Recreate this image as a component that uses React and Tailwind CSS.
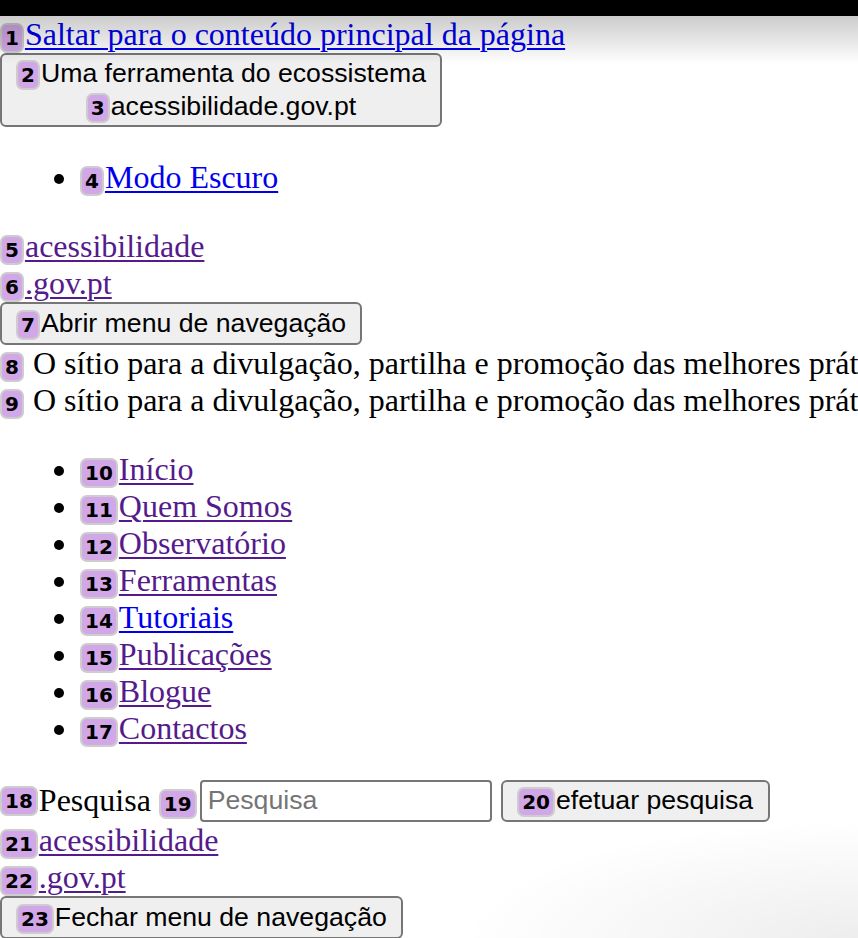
import React from "react";

const serif = "font-['Liberation_Serif',serif]";
const sans = "font-['Liberation_Sans',Arial,sans-serif]";

const Hint = ({ n }) => (
  <span className="inline-block mr-[1px] px-[3px] rounded-[7px] border-2 border-[#cdcdcd] bg-[#d2a7e7] text-black font-['DejaVu_Sans',sans-serif] font-bold text-[20px] leading-[26px]">
    {n}
  </span>
);

const Link = ({ n, children, visited = true }) => (
  <a
    href="#"
    className={`underline decoration-[2px] underline-offset-[3px] ${visited ? "text-[#551a8b]" : "text-[#0000ee]"}`}
  >
    <Hint n={n} />
    {children}
  </a>
);

const Btn = ({ children, className = "" }) => (
  <button
    className={`border-2 border-[#767676] rounded-[6px] bg-[#efefef] px-[14px] py-[2px] text-black text-[26.67px] leading-[32px] ${sans} ${className}`}
  >
    {children}
  </button>
);

const menu = [
  ["10", "Início", true],
  ["11", "Quem Somos", true],
  ["12", "Observatório", true],
  ["13", "Ferramentas", true],
  ["14", "Tutoriais", false],
  ["15", "Publicações", true],
  ["16", "Blogue", true],
  ["17", "Contactos", true],
];

export default function App() {
  return (
    <div className={`relative min-h-screen w-[858px] overflow-hidden bg-white text-black text-[32px] leading-[37px] ${serif}`}>
      <div className="h-4 bg-black" />
      <div className="pointer-events-none absolute left-0 right-0 top-4 h-12 bg-gradient-to-b from-black/20 to-transparent" />

      <div>
        <Link n="1" visited={false}>
          Saltar para o conteúdo principal da página
        </Link>
      </div>

      <Btn className="block">
        <span className="block">
          <Hint n="2" />
          Uma ferramenta do ecossistema
        </span>
        <span className="block">
          <Hint n="3" />
          acessibilidade.gov.pt
        </span>
      </Btn>

      <ul className="list-disc pl-20 my-8">
        <li>
          <Link n="4" visited={false}>
            Modo Escuro
          </Link>
        </li>
      </ul>

      <div>
        <Link n="5">acessibilidade</Link>
      </div>
      <div>
        <Link n="6">.gov.pt</Link>
      </div>
      <Btn className="block py-[3px]">
        <Hint n="7" />
        Abrir menu de navegação
      </Btn>

      <p className="whitespace-nowrap">
        <Hint n="8" /> O sítio para a divulgação, partilha e promoção das melhores práticas de acessibilidade digital.
      </p>
      <p className="whitespace-nowrap">
        <Hint n="9" /> O sítio para a divulgação, partilha e promoção das melhores práticas de acessibilidade digital.
      </p>

      <ul className="list-disc pl-20 my-8">
        {menu.map(([n, label, visited]) => (
          <li key={n}>
            <Link n={n} visited={visited}>
              {label}
            </Link>
          </li>
        ))}
      </ul>

      <form className="flex items-center h-[43px] whitespace-nowrap" onSubmit={(e) => e.preventDefault()}>
        <label className="flex items-center">
          <Hint n="18" />
          Pesquisa
        </label>
        <span className="ml-2">
          <Hint n="19" />
        </span>
        <input
          type="text"
          placeholder="Pesquisa"
          className={`ml-[2px] w-[292px] h-[42px] border-2 border-[#767676] rounded-[4px] px-[6px] text-[26.67px] placeholder:text-[#757575] outline-none ${sans}`}
        />
        <Btn className="ml-[9px] w-[269px] h-[42px]">
          <Hint n="20" />
          efetuar pesquisa
        </Btn>
      </form>

      <div>
        <Link n="21">acessibilidade</Link>
      </div>
      <div>
        <Link n="22">.gov.pt</Link>
      </div>
      <Btn className="block py-[3px]">
        <Hint n="23" />
        Fechar menu de navegação
      </Btn>

      <div className="pointer-events-none absolute bottom-0 right-0 w-[400px] h-[120px] bg-[radial-gradient(ellipse_at_bottom_right,rgba(0,0,0,0.07),transparent_70%)]" />
    </div>
  );
}
